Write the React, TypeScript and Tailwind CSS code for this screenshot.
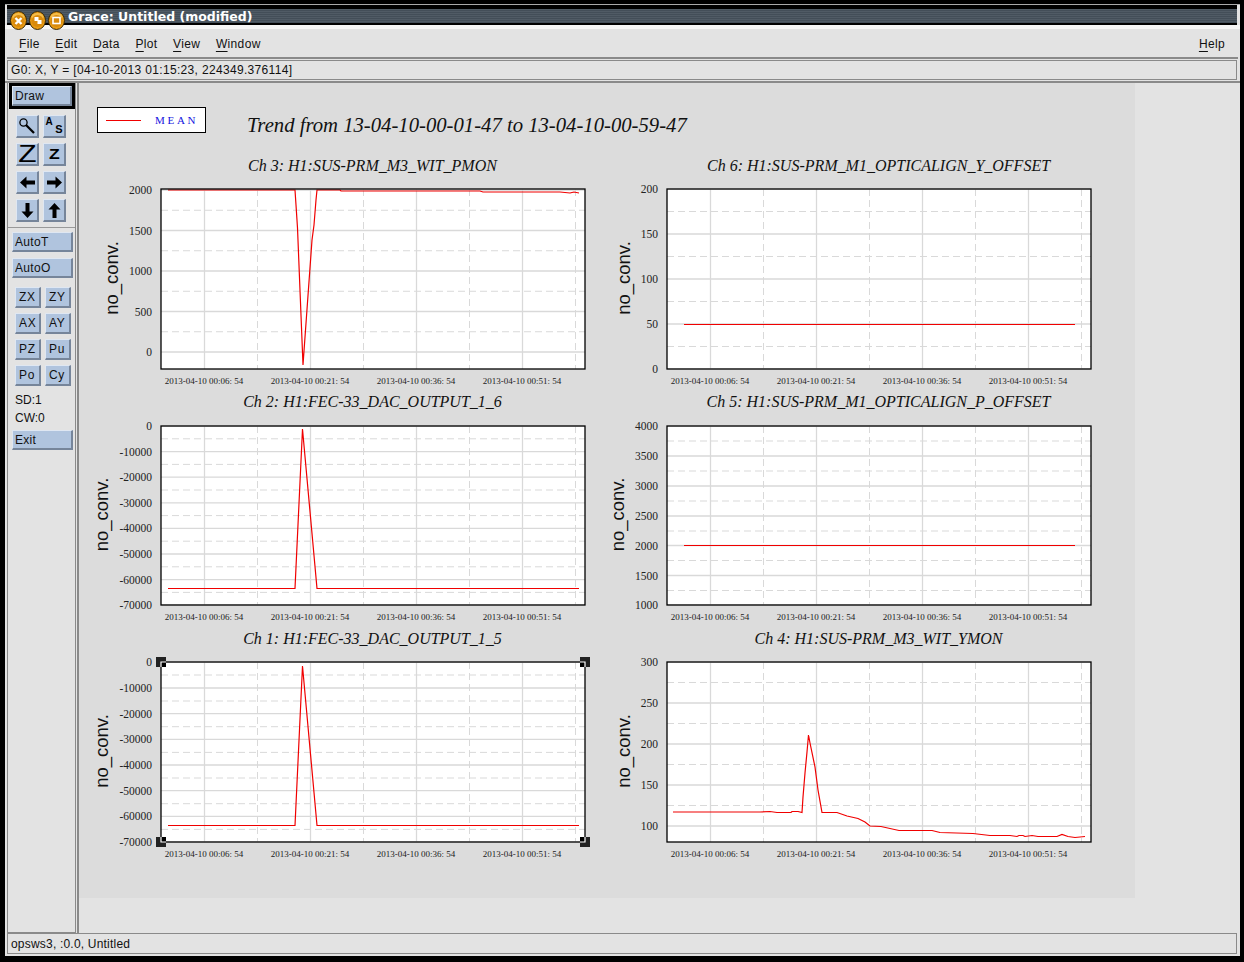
import { ReactNode } from "react";

type Pt = [number, number];

interface ChartDef {
  title: string;
  titleY: number;
  left: number; // plot left, page px
  top: number; // plot top, page px
  height: number;
  cellY: number;
  cellH: number;
  labelX: number;
  ticks: [string, number][];
  line: Pt[];
}

const LEFT_A = 161;
const LEFT_B = 667;
const WIDTH = 424;

const ch4Line: Pt[] = [
  [673, 812], [760, 812], [770, 811.5], [777, 812.5], [791, 812.5], [792, 811.5], [798, 811.5], [802, 812.5],
  [803, 797], [805, 773], [807, 752], [808.5, 735], [810, 743], [815, 767], [818, 790], [822, 812.5], [837, 812.5],
  [847, 816], [858, 818.5], [865, 822], [870, 826], [881, 826.5], [899, 830.5], [932, 830.5], [940, 832.5],
  [973, 833.5], [990, 835.5], [1010, 835.5], [1017, 836.5], [1019, 835.5], [1023, 835.5], [1025, 836.5],
  [1032, 835.5], [1038, 836.5], [1057, 836.5], [1062, 834.5], [1068, 836.5], [1075, 837.5], [1085, 836.5],
];

const charts: ChartDef[] = [
  {
    title: "Ch 3: H1:SUS-PRM_M3_WIT_PMON", titleY: 171,
    left: LEFT_A, top: 189, height: 180, cellY: 150, cellH: 237, labelX: 118,
    ticks: [["2000", 190], ["1500", 230.5], ["1000", 271], ["500", 311.5], ["0", 352]],
    line: [[168, 190], [295, 190], [296, 205], [297.5, 228], [303, 365], [312, 240], [314, 225], [316, 200], [317, 190], [340, 190], [341, 191], [480, 191], [483, 192], [560, 192], [570, 193], [574, 192], [579, 193]],
  },
  {
    title: "Ch 6: H1:SUS-PRM_M1_OPTICALIGN_Y_OFFSET", titleY: 171,
    left: LEFT_B, top: 189, height: 180, cellY: 150, cellH: 237, labelX: 630,
    ticks: [["200", 189], ["150", 234], ["100", 279], ["50", 324], ["0", 369]],
    line: [[684, 324.5], [1075, 324.5]],
  },
  {
    title: "Ch 2: H1:FEC-33_DAC_OUTPUT_1_6", titleY: 407,
    left: LEFT_A, top: 426, height: 179, cellY: 387, cellH: 236, labelX: 108,
    ticks: [["0", 426], ["-10000", 451.6], ["-20000", 477.2], ["-30000", 502.8], ["-40000", 528.4], ["-50000", 554], ["-60000", 579.6], ["-70000", 605]],
    line: [[168, 588.5], [295, 588.5], [302.5, 429], [317, 588.5], [579, 588.5]],
  },
  {
    title: "Ch 5: H1:SUS-PRM_M1_OPTICALIGN_P_OFFSET", titleY: 407,
    left: LEFT_B, top: 426, height: 179, cellY: 387, cellH: 236, labelX: 624,
    ticks: [["4000", 426], ["3500", 456], ["3000", 486], ["2500", 516], ["2000", 545.5], ["1500", 575.5], ["1000", 605]],
    line: [[684, 545.5], [1075, 545.5]],
  },
  {
    title: "Ch 1: H1:FEC-33_DAC_OUTPUT_1_5", titleY: 644,
    left: LEFT_A, top: 662, height: 180, cellY: 623, cellH: 237, labelX: 108,
    ticks: [["0", 662], ["-10000", 688], ["-20000", 713.7], ["-30000", 739.4], ["-40000", 765], ["-50000", 790.7], ["-60000", 816.4], ["-70000", 842]],
    line: [[168, 825.5], [295, 825.5], [302.5, 666], [317, 825.5], [579, 825.5]],
  },
  {
    title: "Ch 4: H1:SUS-PRM_M3_WIT_YMON", titleY: 644,
    left: LEFT_B, top: 662, height: 180, cellY: 623, cellH: 237, labelX: 630,
    ticks: [["300", 662], ["250", 703], ["200", 744], ["150", 785], ["100", 826]],
    line: ch4Line,
  },
];

const xLabels = ["2013-04-10 00:06: 54", "2013-04-10 00:21: 54", "2013-04-10 00:36: 54", "2013-04-10 00:51: 54"];

function Chart({ c, selected }: { c: ChartDef; selected?: boolean }) {
  const bottom = c.top + c.height;
  const right = c.left + WIDTH;
  const pitch = c.ticks[1][1] - c.ticks[0][1];
  const minor = c.ticks.map(([, y]) => y + pitch / 2).filter((y) => y < bottom);
  const cellX = c.left - 82;
  const midY = c.top + c.height / 2 - 1;

  return (
    <svg
      width={506}
      height={c.cellH}
      viewBox={`${cellX} ${c.cellY} 506 ${c.cellH}`}
      className="block overflow-visible"
    >
      <rect x={c.left} y={c.top} width={WIDTH} height={c.height} fill="#fff" />
      {[0, 1, 2, 3].map((i) => (
        <g key={i} stroke="#d9d9d9">
          <line x1={c.left + 43.5 + i * 106} x2={c.left + 43.5 + i * 106} y1={c.top} y2={bottom} strokeWidth={1.3} />
          <line x1={c.left + 96.5 + i * 106} x2={c.left + 96.5 + i * 106} y1={c.top} y2={bottom} strokeWidth={1} strokeDasharray="7 4" />
        </g>
      ))}
      {c.ticks.map(([label, y]) => (
        <line key={label} x1={c.left} x2={right} y1={y} y2={y} stroke="#d9d9d9" strokeWidth={1.3} />
      ))}
      {minor.map((y) => (
        <line key={y} x1={c.left} x2={right} y1={y} y2={y} stroke="#d9d9d9" strokeWidth={1} strokeDasharray="7 4" />
      ))}
      <polyline points={c.line.map((p) => p.join(",")).join(" ")} fill="none" stroke="#f00000" strokeWidth={1.2} />
      <rect x={c.left} y={c.top} width={WIDTH} height={c.height} fill="none" stroke="#000" strokeWidth={1.3} />

      {c.ticks.map(([label, y]) => (
        <text key={label} x={c.left - 9} y={y + 4} textAnchor="end" fill="#222" className="font-['Liberation_Serif',serif] text-[11.5px]">
          {label}
        </text>
      ))}
      {xLabels.map((l, i) => (
        <text key={l} x={c.left + 43 + i * 106} y={bottom + 15} textAnchor="middle" fill="#222" className="font-['Liberation_Serif',serif] text-[9px]">
          {l}
        </text>
      ))}
      <text x={c.left + WIDTH / 2 - 0.5} y={c.titleY} textAnchor="middle" fill="#111" className="font-['Liberation_Serif',serif] text-[16px] italic">
        {c.title}
      </text>
      <text
        x={c.labelX}
        y={midY}
        textAnchor="middle"
        fill="#111"
        transform={`rotate(-90 ${c.labelX} ${midY})`}
        className="font-['Liberation_Sans',sans-serif] text-[18.5px]"
      >
        no_conv.
      </text>

      {selected && (
        <g>
          <rect x={c.left - 5} y={c.top - 5} width={10} height={10} fill="#222" />
          <rect x={right - 5} y={c.top - 5} width={10} height={10} fill="#222" />
          <rect x={c.left - 5} y={bottom - 5} width={10} height={10} fill="#222" />
          <rect x={right - 5} y={bottom - 5} width={10} height={10} fill="#222" />
          <rect x={c.left} y={c.top} width={5} height={5} fill="#000" />
          <rect x={right - 5} y={c.top} width={5} height={5} fill="#000" />
          <rect x={c.left} y={bottom - 5} width={5} height={5} fill="#000" />
          <rect x={right - 5} y={bottom - 5} width={5} height={5} fill="#000" />
          <path
            d={`M${c.left + 5} ${c.top}H${c.left}V${c.top + 5}M${right - 5} ${c.top}H${right}V${c.top + 5}M${c.left + 5} ${bottom}H${c.left}V${bottom - 5}M${right - 5} ${bottom}H${right}V${bottom - 5}`}
            fill="none"
            stroke="#fff"
            strokeWidth={1.2}
          />
        </g>
      )}
    </svg>
  );
}

function WinButton({ glyph }: { glyph: ReactNode }) {
  return (
    <svg width={17} height={19} viewBox="0.5 0 17 19" className="block">
      <ellipse cx={9} cy={9.5} rx={8} ry={9} fill="#e89a12" stroke="#3a2a08" strokeWidth={1} />
      <ellipse cx={9} cy={6} rx={6} ry={4} fill="#f4bc4a" />
      <ellipse cx={9} cy={10} rx={6} ry={6} fill="#d98a0c" />
      {glyph}
    </svg>
  );
}

function Menu({ first, rest }: { first: string; rest: string }) {
  return (
    <span>
      <span className="underline underline-offset-[3px]">{first}</span>
      {rest}
    </span>
  );
}

const steel = "bg-[#b0c4de] border-t border-l border-t-[#dfe7f2] border-l-[#dfe7f2] border-b-2 border-r-2 border-b-[#76859a] border-r-[#76859a]";

function IconBtn({ children }: { children: ReactNode }) {
  return <div className={`${steel} w-[23px] h-[23px] flex items-center justify-center text-black`}>{children}</div>;
}

function TextBtn({ label }: { label: string }) {
  return <div className={`${steel} w-[26px] h-[21px] pl-[3px] flex items-center text-[12px] tracking-[0.7px]`}>{label}</div>;
}

function WideBtn({ label }: { label: string }) {
  return <div className={`${steel} w-[61px] h-[20px] ml-[4px] pl-[2px] flex items-center text-[12px] tracking-[0.3px]`}>{label}</div>;
}

function Arrow({ rot }: { rot: number }) {
  return (
    <svg width={17} height={15} viewBox="0 0 17 15" style={{ transform: `rotate(${rot}deg)` }}>
      <path d="M1 7.5 7.5 1.5v4H16v4H7.5v4z" fill="#000" />
    </svg>
  );
}

export default function App() {
  return (
    <div className="w-[1244px] h-[962px] bg-black pt-[4px] pl-[5px] pr-[4px] pb-[6px] font-['Liberation_Sans',Arial,sans-serif] text-[#111] overflow-hidden">
      <div className="h-full flex flex-col bg-[#e3e3e3] border-t border-[#aaa]">
        {/* title bar */}
        <div className="relative h-[20px] shrink-0 ml-[2px] mr-[3px] bg-black pt-[4px] pb-[2px]">
          <div className="h-[14px] flex items-center pl-[61px] pt-[2px] text-white font-bold text-[12.5px] font-['DejaVu_Sans',sans-serif] bg-[repeating-linear-gradient(180deg,#505b65_0px,#505b65_1px,#434e58_1px,#434e58_2px)]">
            Grace: Untitled (modified)
          </div>
          <div className="absolute left-[3px] top-[6px] flex gap-[2px]">
            <WinButton glyph={<path d="M6 7l6 6M12 7l-6 6" stroke="#fff" strokeWidth={2.4} />} />
            <WinButton glyph={<path d="M6 6h4v3h3v4H9v-3H6z" fill="#fff" />} />
            <WinButton glyph={<rect x={5.5} y={6.5} width={7} height={6} fill="none" stroke="#fff" strokeWidth={1.6} />} />
          </div>
        </div>
        <div className="h-[4px] shrink-0 bg-[#f6f6f6]" />

        {/* menu bar */}
        <div className="h-[30px] shrink-0 ml-[2px] mr-[2px] pl-[12px] pr-[13px] pt-[2px] flex items-center gap-[15.6px] text-[12px] tracking-[0.35px] border-b-2 border-[#8a8a8a]">
          <Menu first="F" rest="ile" />
          <Menu first="E" rest="dit" />
          <Menu first="D" rest="ata" />
          <Menu first="P" rest="lot" />
          <Menu first="V" rest="iew" />
          <Menu first="W" rest="indow" />
          <div className="ml-auto">
            <Menu first="H" rest="elp" />
          </div>
        </div>

        {/* locator */}
        <div className="h-[20px] shrink-0 mt-[1px] ml-[2px] mr-[3px] pl-[3px] flex items-center text-[12px] tracking-[0.33px] border border-[#8a8a8a]">
          G0: X, Y = [04-10-2013 01:15:23, 224349.376114]
        </div>

        {/* main area */}
        <div className="flex-1 min-h-0 flex mt-[1px] border-t-2 border-[#8a8a8a]">
          <div className="w-[69px] shrink-0 ml-[2px] border-l border-r border-b border-[#8a8a8a] flex flex-col text-[12px]">
            <div className="mx-[1px] w-[66px] h-[26px] border-[3px] border-black">
              <div className={`${steel} h-full pl-[2px] flex items-center tracking-[0.3px]`}>Draw</div>
            </div>
            <div className="mt-[6px] ml-[8px] grid grid-cols-[23px_23px] gap-x-[4px] gap-y-[5px]">
              <IconBtn>
                <svg width={18} height={18} viewBox="0 0 18 18">
                  <circle cx={5.5} cy={5.5} r={3.6} fill="none" stroke="#000" strokeWidth={1.3} />
                  <path d="M8 8l8 8" stroke="#000" strokeWidth={2.3} />
                </svg>
              </IconBtn>
              <IconBtn>
                <div className="relative w-[17px] h-[19px] font-bold">
                  <span className="absolute left-0 top-[0px] text-[10px] leading-[10px]">A</span>
                  <span className="absolute right-0 top-[7px] text-[11px] leading-[11px]">S</span>
                </div>
              </IconBtn>
              <IconBtn>
                <span className="text-[24px] leading-none scale-x-125">Z</span>
              </IconBtn>
              <IconBtn>
                <span className="text-[14px] leading-none font-bold scale-x-125">Z</span>
              </IconBtn>
              <IconBtn><Arrow rot={0} /></IconBtn>
              <IconBtn><Arrow rot={180} /></IconBtn>
              <IconBtn><Arrow rot={270} /></IconBtn>
              <IconBtn><Arrow rot={90} /></IconBtn>
            </div>
            <div className="mt-[5px] h-px bg-[#999]" />
            <div className="mt-[4px]"><WideBtn label="AutoT" /></div>
            <div className="mt-[6px]"><WideBtn label="AutoO" /></div>
            <div className="mt-[9px] ml-[7px] grid grid-cols-[26px_26px] gap-x-[4px] gap-y-[5px]">
              {["ZX", "ZY", "AX", "AY", "PZ", "Pu", "Po", "Cy"].map((b) => (
                <TextBtn key={b} label={b} />
              ))}
            </div>
            <div className="mt-[5px] ml-[7px] leading-[18px]">
              <div>SD:1</div>
              <div>CW:0</div>
            </div>
            <div className="mt-[3px]"><WideBtn label="Exit" /></div>
          </div>

          <div className="w-[2px] shrink-0 ml-[1px] bg-[#8a8a8a]" />

          <div className="flex-1 min-w-0">
            {/* canvas */}
            <div className="w-[1056px] h-[815px] bg-[#dcdcdc]">
              <div className="h-[67px] flex items-start">
                <div className="mt-[24px] ml-[18px] w-[109px] h-[26px] bg-white border border-black flex items-center pl-[8px] shrink-0">
                  <div className="w-[35px] h-px bg-[#f00000]" />
                  <span className="ml-[14px] font-['Liberation_Serif',serif] text-[11px] tracking-[2.7px] text-[#1414e0]">MEAN</span>
                </div>
                <div className="mt-[27px] ml-[41px] font-['Liberation_Serif',serif] italic text-[20.7px] text-[#111] whitespace-nowrap">
                  Trend from 13-04-10-00-01-47 to 13-04-10-00-59-47
                </div>
              </div>
              <div className="grid grid-cols-[506px_506px]">
                {charts.map((c) => (
                  <Chart key={c.title} c={c} selected={c.title.startsWith("Ch 1")} />
                ))}
              </div>
            </div>
          </div>
        </div>

        {/* status */}
        <div className="h-[21px] shrink-0 ml-[2px] mr-[3px] mb-[2px] pl-[3px] flex items-center text-[12px] tracking-[0.2px] border border-[#8a8a8a]">
          opsws3, :0.0, Untitled
        </div>
      </div>
    </div>
  );
}
